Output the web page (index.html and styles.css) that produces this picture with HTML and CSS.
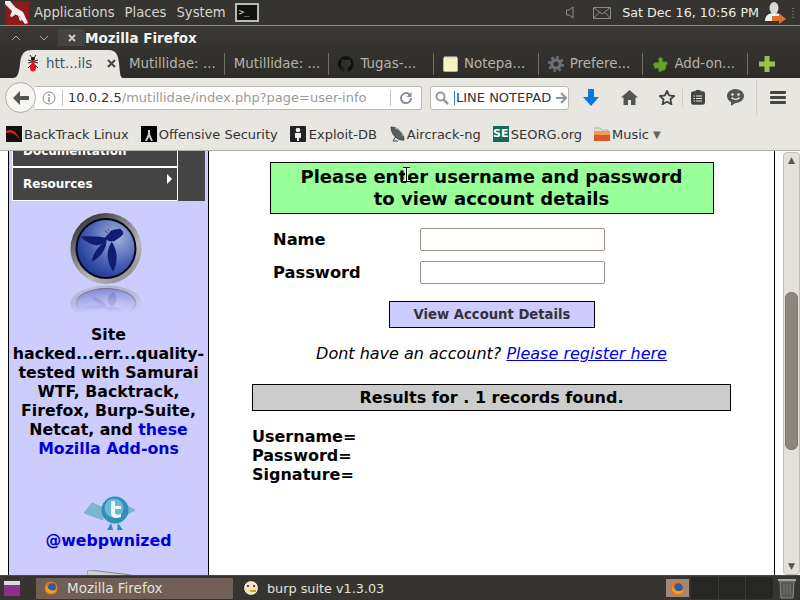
FILE: index.html
```html
<!DOCTYPE html>
<html lang="en">
<head>
<meta charset="utf-8">
<title>Mozilla Firefox</title>
<link rel="stylesheet" href="styles.css">
</head>
<body>
<div class="desktop">
  <header class="panel-top">
    <svg class="kali" width="24" height="24" viewBox="0 0 24 24"><rect width="24" height="24" fill="#8e1a1c"/><path d="M0 0h5l5 6 8 5 5 11-3 1-6-8-5-2-2 3-2-1 2-5-7-7z" fill="#f4eeee"/><path d="M9 11l-3 5 4-2zM13 14l2 6 2-1z" fill="#f4eeee"/></svg>
    <nav class="menus"><span>Applications</span><span>Places</span><span>System</span></nav>
    <div class="term"><span>&gt;_</span></div>
    <div class="tray">
      <svg width="8" height="13" viewBox="0 0 8 13"><path d="M.5 4h2.500l4-3v11l-4-3H.5z" fill="none" stroke="#8d8b85"/></svg>
      <svg class="mail" width="18" height="12" viewBox="0 0 18 12"><path d="M.5.5h17v11H.5zM.5.5l8.500 6.500 8.500-6.500M.5 11.500l6-6.500M17.500 11.500l-6-6.500" fill="none" stroke="#8d8b85"/></svg>
      <span class="clock">Sat Dec 16, 10:56 PM</span>
      <svg class="user" width="22" height="24" viewBox="0 0 22 24"><ellipse cx="9" cy="7" rx="4.500" ry="6" fill="#d9d9d6"/><path d="M0 20c0-5 3-8 9-8s8 3 8 8z" fill="#efefec"/><path d="M7 15h7v-3l7 6-7 5v-3H7z" fill="#e0702a"/></svg>
      <i class="grip"></i>
    </div>
  </header>
  <div class="titlebar">
    <div class="winbtns">
      <svg width="10" height="6" viewBox="0 0 10 6"><path d="M1 5l4-4 4 4" fill="none" stroke="#aaa"/></svg>
      <svg width="10" height="6" viewBox="0 0 10 6"><path d="M1 1l4 4 4-4" fill="none" stroke="#aaa"/></svg>
      <div class="closebtn"><svg width="8" height="8" viewBox="0 0 8 8"><path d="M1 1l6 6M7 1L1 7" stroke="#ccc" stroke-width="2"/></svg></div>
    </div>
    <strong class="wintitle">Mozilla Firefox</strong>
  </div>
  <div class="tabbar">
    <div class="tab active">
      <svg width="12" height="17" viewBox="0 0 12 17"><path d="M3 0l2 3M9 0L7 3M1 5l10 3M11 5L1 8M1 13l3-3M11 13l-3-3" stroke="#222" fill="none"/><ellipse cx="6" cy="4" rx="2" ry="2" fill="#111"/><ellipse cx="6" cy="7.500" rx="1.700" ry="2" fill="#c22"/><ellipse cx="6" cy="12.500" rx="3" ry="4" fill="#e40f1a"/></svg>
      <span>htt...ils</span>
      <svg class="tabx" width="9" height="9" viewBox="0 0 9 9"><path d="M1 1l7 7M8 1L1 8" stroke="#444" stroke-width="2"/></svg>
    </div>
    <div class="tab w105"><span>Mutillidae: ...</span></div>
    <div class="tab w105"><span>Mutillidae: ...</span></div>
    <div class="tab w105"><svg width="16" height="16" viewBox="0 0 16 16"><path fill="#111" d="M8 0a8 8 0 0 0-2.500 15.600c.4.100.5-.2.500-.4v-1.400c-2.200.5-2.700-1-2.700-1-.4-.9-.9-1.200-.9-1.200-.7-.5.100-.5.100-.5.800.100 1.200.8 1.200.8.700 1.200 1.900.9 2.300.7.100-.5.300-.9.500-1.100-1.800-.2-3.600-.9-3.600-4 0-.9.300-1.600.8-2.100-.1-.2-.4-1 .1-2.100 0 0 .7-.2 2.200.8a7.600 7.600 0 0 1 4 0c1.500-1 2.200-.8 2.200-.8.400 1.100.2 1.900.1 2.100.5.600.8 1.300.8 2.100 0 3.100-1.900 3.700-3.700 3.900.3.300.6.800.6 1.500v2.200c0 .2.100.5.600.4A8 8 0 0 0 8 0z"/></svg><span>Tugas-...</span></div>
    <div class="tab w105"><svg width="15" height="16" viewBox="0 0 15 16"><rect x=".5" y="1.500" width="14" height="14" rx="1" fill="#f7f3c2" stroke="#b5b2a0"/><path d="M1 1.500h13" stroke="#ddd" stroke-width="2"/></svg><span>Notepa...</span></div>
    <div class="tab w105"><svg width="16" height="16" viewBox="0 0 16 16"><circle cx="8" cy="8" r="4.200" fill="none" stroke="#6d7278" stroke-width="3.200"/><circle cx="8" cy="8" r="6.800" fill="none" stroke="#6d7278" stroke-width="2.400" stroke-dasharray="2.700 2.640"/></svg><span>Prefere...</span></div>
    <div class="tab w105"><svg width="16" height="16" viewBox="0 0 16 16"><path d="M1 8l3-2 2 1 1-2-1-2 3-2 2 2-1 2 2 1 2-1 2 3-2 1v3l-2 3-2-1-1 2-3-1 1-2-2-1-2 1z" fill="#6aa02c" stroke="#3d6f16" stroke-width=".8"/></svg><span>Add-on...</span></div>
    <div class="plus"><svg width="16" height="16" viewBox="0 0 16 16"><path d="M5.500 0h5v5.500H16v5h-5.500V16h-5v-5.500H0v-5h5.500z" fill="#9dc243"/></svg></div>
  </div>
  <div class="navbar">
    <div class="backbtn"><svg width="16" height="14" viewBox="0 0 16 14"><path d="M7 0L0 7l7 7V9h9V5H7z" fill="#555"/></svg></div>
    <div class="urlbar">
      <svg width="14" height="14" viewBox="0 0 14 14"><circle cx="7" cy="7" r="6" fill="none" stroke="#8a8a88"/><path d="M7 6v5M7 3v2" stroke="#8a8a88" stroke-width="1.400"/></svg>
      <span class="sep"></span>
      <span class="url"><b>10.0.2.5</b>/mutillidae/index.php?page=user-info</span>
      <span class="sep right"></span>
      <svg width="14" height="14" viewBox="0 0 14 14"><path d="M12 7a5 5 0 1 1-1.500-3.500" fill="none" stroke="#8a8f94" stroke-width="2"/><path d="M12.500 1v5h-5z" fill="#8a8f94"/></svg>
    </div>
    <div class="searchbar">
      <svg width="14" height="14" viewBox="0 0 14 14"><circle cx="5.500" cy="5.500" r="4" fill="none" stroke="#9a9a98" stroke-width="2"/><path d="M8.500 8.500L13 13" stroke="#9a9a98" stroke-width="2.500"/></svg>
      <span class="caret"></span><span class="query">LINE NOTEPAD</span>
      <svg class="go" width="11" height="12" viewBox="0 0 11 12"><path d="M0 6h9M5 1l5 5-5 5" fill="none" stroke="#8d96a0" stroke-width="2"/></svg>
    </div>
    <div class="tools">
      <svg class="t1" width="16" height="17" viewBox="0 0 16 17"><path d="M5 0h6v8h5l-8 9-8-9h5z" fill="#0a78e0"/></svg>
      <svg class="t2" width="17" height="15" viewBox="0 0 17 15"><path d="M8.500 0L17 7.500h-2.500V15H10V10H7v5H2.500V7.500H0z" fill="#555"/></svg>
      <svg class="t3" width="16" height="15" viewBox="0 0 16 15"><path d="M8 1l2.100 4.500 4.900.6-3.600 3.300 1 4.800L8 11.800l-4.400 2.400 1-4.800L1 6.100l4.900-.6z" fill="none" stroke="#444" stroke-width="1.800"/></svg>
      <span class="tsep"></span>
      <svg class="t4" width="14" height="15" viewBox="0 0 14 15"><rect x=".8" y="2" width="12.400" height="12" rx="1.500" fill="#444" stroke="#444" stroke-width="1.600"/><rect x="4.500" y="0" width="5" height="3" fill="#444"/><path d="M5 6h6M5 8.500h6M5 11h6M2.500 6h1.500M2.500 8.500h1.500M2.500 11h1.500" stroke="#e8e6e1" stroke-width="1.200"/></svg>
      <svg class="t5" width="17" height="17" viewBox="0 0 17 17"><path d="M8.500 0C13 0 17 3 17 7s-4 7-8.500 7L4 17v-4C1.500 12 0 9.500 0 7c0-4 4-7 8.500-7z" fill="#555"/><circle cx="5.500" cy="5.500" r="1.300" fill="#e8e6e1"/><circle cx="11.500" cy="5.500" r="1.300" fill="#e8e6e1"/><path d="M4.500 8.500c2 2.500 6 2.500 8 0" stroke="#e8e6e1" fill="none" stroke-width="1.300"/></svg>
      <span class="tsep long"></span>
      <div class="burger"><i></i><i></i><i></i></div>
    </div>
  </div>
  <div class="bookmarks">
    <span class="bm"><svg width="16" height="16" viewBox="0 0 16 16"><rect width="16" height="16" fill="#111"/><path d="M0 5c6-3 11 1 14 9C10 8 6 6 0 7z" fill="#c22"/></svg>BackTrack Linux</span>
    <span class="bm"><svg width="16" height="16" viewBox="0 0 16 16"><rect width="16" height="16" fill="#000"/><path d="M7 4h2v4l3 7h-2L8 11l-2 4H4l3-7z" fill="#ccc"/></svg>Offensive Security</span>
    <span class="bm edb"><svg width="16" height="16" viewBox="0 0 16 16"><rect width="16" height="16" rx="1" fill="#222"/><circle cx="8" cy="4" r="2.300" fill="#eee"/><path d="M5 7h6v5H9v3H7v-3H5z" fill="#eee"/></svg>Exploit-DB</span>
    <span class="bm"><svg width="16" height="16" viewBox="0 0 16 16"><path d="M2 1c7 0 13 6 13 13C8 15 2 8 2 1z" fill="#5b605f" stroke="#333" stroke-width=".8"/><path d="M6 2c4 1 7 4 8 8" stroke="#a9c0c4" fill="none"/><path d="M7 10l-3 5h5" stroke="#444" fill="none"/></svg>Aircrack-ng</span>
    <span class="bm se"><em>SE</em>SEORG.org</span>
    <span class="bm"><svg width="16" height="16" viewBox="0 0 16 16"><path d="M0 2h6l2 2h6v2H0z" fill="#ddd" stroke="#999" stroke-width=".6"/><rect y="5" width="16" height="10" fill="#d9582a"/><rect y="5" width="16" height="4" fill="#ee9a5a"/></svg>Music <small>▼</small></span>
  </div>
  <main class="browser">
    <div class="page">
      <aside class="sidebar">
        <div class="menu">
          <div class="menu-col">
            <div class="item doc"><span>Documentation</span></div>
            <div class="item res"><span>Resources</span><i class="arrow"></i></div>
          </div>
          <div class="menu-fill"></div>
        </div>
        <div class="owasp">
          <svg width="72" height="102" viewBox="0 0 72 102">
            <defs>
              <radialGradient id="g" cx=".68" cy=".3" r=".85"><stop offset="0" stop-color="#a6b4dc"/><stop offset=".55" stop-color="#4a62b4"/><stop offset="1" stop-color="#162c8c"/></radialGradient>
              <linearGradient id="r" x1=".1" y1="0" x2=".8" y2="1"><stop offset="0" stop-color="#222"/><stop offset=".35" stop-color="#777"/><stop offset=".7" stop-color="#b8b8b8"/><stop offset="1" stop-color="#888"/></linearGradient>
              <linearGradient id="f" x1="0" y1="0" x2="0" y2="1"><stop offset="0" stop-color="#fff" stop-opacity=".9"/><stop offset="1" stop-color="#fff" stop-opacity="0"/></linearGradient>
              <mask id="m"><rect y="72" width="72" height="28" fill="url(#f)"/></mask>
              <g id="disc">
                <circle cx="36" cy="35.500" r="35.500" fill="url(#r)"/>
                <circle cx="36" cy="35.500" r="30.500" fill="#05081e"/>
                <circle cx="36" cy="35.500" r="28.500" fill="url(#g)"/>
                <path d="M10.700 23.700c10-1 21 0 27.300 1.600-4 6-9 7.500-13 6.700-6-1-11-5-14.300-8.300zM36.700 27.700c-1 9-6 17-15 21 1-7 6-16 15-21zM41.700 28.700c6 8 6.500 20 1.600 30-5-7-9-19-1.600-30z" fill="#101d70"/>
                <path d="M35 25c2-3 5-5 6-7l3-1 6-1c2 1 3 3 3 5l-3 3-6 4-5 0zM38 16l1 2M35 18l3 2" fill="#101d70" stroke="#101d70" stroke-width=".6"/>
              </g>
            </defs>
            <use href="#disc"/>
            <g mask="url(#m)" opacity=".6"><use href="#disc" transform="translate(0 108) scale(1 -.5)"/></g>
          </svg>
        </div>
        <p class="blurb">Site hacked...err...quality-tested with Samurai WTF, Backtrack, Firefox, Burp-Suite, Netcat, and <a>these Mozilla Add-ons</a></p>
        <div class="bird">
          <svg width="52" height="36" viewBox="0 0 52 36"><path d="M0 17l8-10 12 5-1 12zM40 8l11 6-10 6z" fill="#7db7cf" stroke="#5a9fbe" stroke-width=".5"/><circle cx="31" cy="14" r="13.500" fill="#2f8fb8"/><circle cx="30" cy="12" r="9.500" fill="#6db8d6"/><path d="M27 5h4v5h6v3h-6v4c0 2 3 2 6 1v3c-5 2-10 1-10-4z" fill="#eef8fb"/><path d="M27 27l-4 7h6zM34 27l-1 7h6z" fill="#2f8fb8"/></svg>
        </div>
        <a class="handle">@webpwnized</a>
        <svg class="next-logo" width="44" height="6" viewBox="0 0 44 6"><path d="M0 3c0-2 1-3 3-3l41 5v1H0z" fill="#cfcfcf" stroke="#777" stroke-width=".8"/></svg>
      </aside>
      <section class="content">
        <h2 class="banner">Please enter username and password<br>to view account details</h2>
        <form class="login">
          <div class="field"><label>Name</label><input type="text"></div>
          <div class="field"><label>Password</label><input type="text"></div>
          <div class="actions"><button type="button">View Account Details</button></div>
        </form>
        <p class="register"><i>Dont have an account? </i><a>Please register here</a></p>
        <div class="results">Results for . 1 records found.</div>
        <div class="record">Username=<br>Password=<br>Signature=</div>
      </section>
    </div>
    <div class="scrollbar">
      <span class="up">▲</span>
      <div class="thumb"></div>
      <span class="down">▼</span>
    </div>
    <svg class="ibeam" width="9" height="15" viewBox="0 0 9 15"><path d="M1 .5h7M4.500.5v14M1 14.500h7" stroke="#fff" stroke-width="3"/><path d="M1 .5h7M4.500.5v14M1 14.500h7" stroke="#000"/></svg>
  </main>
  <footer class="panel-bottom">
    <svg class="showdesk" width="16" height="15" viewBox="0 0 16 15"><rect width="16" height="15" fill="#8d2f8d"/><rect width="16" height="4" fill="#dcdcdc"/></svg>
    <div class="task current"><svg width="14" height="14" viewBox="0 0 16 16"><circle cx="8" cy="8" r="7.500" fill="#e8701f"/><circle cx="9" cy="7" r="4.500" fill="#2a5ca8"/><path d="M3 4c1 6 6 9 12 5-2 6-11 7-13 0z" fill="#f2a21f"/></svg><span>Mozilla Firefox</span></div>
    <div class="task burp"><svg width="16" height="16" viewBox="0 0 16 16"><circle cx="8" cy="8" r="7.500" fill="#f3e3c0" stroke="#222"/><circle cx="5" cy="6" r="1" fill="#222"/><circle cx="11" cy="6" r="1" fill="#222"/><path d="M6 10h7v2H8z" fill="#c9a21f"/></svg><span>burp suite v1.3.03</span></div>
    <div class="pager">
      <div class="ws on"><svg width="15" height="15" viewBox="0 0 16 16"><circle cx="8" cy="8" r="7.500" fill="#e8701f"/><circle cx="9" cy="7" r="4.500" fill="#2a5ca8"/><path d="M3 4c1 6 6 9 12 5-2 6-11 7-13 0z" fill="#f2a21f"/></svg></div>
      <div class="ws"></div><div class="ws"></div><div class="ws last"></div>
    </div>
    <svg class="trash" width="18" height="22" viewBox="0 0 18 22"><path d="M0 2h18v2H0z" fill="#aaa"/><path d="M2 4h14l-1 17H3z" fill="#55564f" stroke="#8a8a86"/><path d="M6 7v11M9 7v11M12 7v11" stroke="#777"/></svg>
  </footer>
</div>
</body>
</html>
```
FILE: styles.css
```css
* { box-sizing: border-box; }
html, body { margin: 0; padding: 0; }
body { font-family: "DejaVu Sans", sans-serif; overflow: hidden; }
.desktop { width: 800px; height: 600px; display: flex; flex-direction: column; overflow: hidden; background: #fff; }

.panel-top { height: 26px; flex: none; display: flex; align-items: center; background: #353431; border-bottom: 1px solid #8b8a84; color: #d8d6cf; font-size: 13.2px; }
.kali { margin-left: 5px; }
.menus { display: flex; gap: 10px; margin-left: 5px; }
.term { width: 24px; height: 19px; margin-left: 9px; background: #111; border: 2px solid #b9b9b4; color: #ddd; font: 9px/14px "DejaVu Sans Mono", monospace; padding-left: 2px; }
.tray { margin-left: auto; display: flex; align-items: center; }
.tray .mail { margin-left: 19px; }
.clock { margin-left: 11px; color: #eeeeea; font-size: 12.7px; }
.user { margin-left: 6px; }
.grip { width: 2px; height: 10px; margin: 0 6px 0 5px; background: repeating-linear-gradient(#6a6964 0 1px, transparent 1px 3px); }

.titlebar { height: 23px; flex: none; display: flex; align-items: center; background: linear-gradient(#3a3936, #343330); }
.winbtns { display: flex; align-items: center; width: 85px; padding-left: 11px; }
.winbtns svg + svg { margin-left: 18px; }
.closebtn { width: 27px; height: 17px; margin-left: 9px; display: flex; align-items: center; justify-content: center; background: #45443f; border-radius: 2px; }
.wintitle { color: #f4f4f0; font-size: 13.5px; }

.tabbar { height: 29px; flex: none; display: flex; align-items: stretch; background: linear-gradient(#343330, #2d2c29); padding-left: 10px; color: #b5b4ac; font-size: 13.4px; }
.tab { display: flex; align-items: center; gap: 6px; white-space: nowrap; padding-bottom: 1px; }
.tab.active { width: 113px; height: 28px; margin: 1px -3px 0 0; padding-left: 17px; gap: 7px; background: #e8e6e1; color: #44525c; clip-path: path("M3 28C8 28 9 22 10 14C11 4 14 0 22 0L99 0C106 0 108 5 109 13C110 22 110 28 113 28Z"); }
.tabx { margin-left: 8px; }
.w105 { width: 104.7px; border-right: 1px solid #70706a; margin: 4px 0 3px; padding-left: 9px; }
.w105 svg { flex: none; }
.plus { display: flex; align-items: center; padding-left: 11px; }

.navbar { height: 39px; flex: none; display: flex; align-items: center; background: #e8e6e1; padding-left: 5px; }
.backbtn { width: 31px; height: 31px; border-radius: 50%; background: #f6f5f2; border: 1px solid #b3ada2; display: flex; align-items: center; justify-content: center; z-index: 1; }
.urlbar { width: 387px; height: 24px; margin-left: -1px; background: #fff; border: 1px solid #bdb8ae; border-left: 0; border-radius: 0 3px 3px 0; display: flex; align-items: center; padding: 0 8px 0 7px; }
.sep { width: 1px; height: 16px; background: #c9c6bf; margin: 0 5px 0 6px; }
.sep.right { margin: 0 8px 0 auto; }
.url { font-size: 13px; color: #9a9a96; white-space: nowrap; }
.url b { font-weight: 400; color: #333; }
.searchbar { width: 139px; height: 24px; margin-left: 8px; background: #fff; border: 1px solid #bdb8ae; border-radius: 3px; display: flex; align-items: center; padding-left: 4px; font-size: 13px; color: #333; white-space: nowrap; overflow: hidden; }
.caret { width: 1px; height: 14px; background: #2a7bd6; margin-left: 5px; }
.query { margin-left: 1px; }
.go { flex: none; margin-left: 5px; }
.tools { display: flex; align-items: center; flex: 1; }
.t1 { margin-left: 14px; }
.t2 { margin-left: 22px; }
.t3 { margin-left: 21px; }
.tsep { width: 1px; height: 18px; background: #cfccc5; margin-left: 7px; }
.tsep.long { height: 35px; margin-left: 12px; }
.t4 { margin-left: 8px; }
.t5 { margin-left: 22px; }
.burger { margin-left: 13px; width: 16px; display: flex; flex-direction: column; gap: 2px; }
.burger i { display: block; height: 3px; background: #444; border-radius: 1px; }

.bookmarks { height: 34px; flex: none; display: flex; align-items: center; background: #e8e6e1; border-bottom: 1px solid #b4afa4; padding: 1px 0 0 6px; gap: 12px; font-size: 13px; color: #333; white-space: nowrap; }
.bm { display: inline-flex; align-items: center; gap: 2px; }
.edb { gap: 3px; }
.bm small { font-size: 10px; color: #666; margin-left: 2px; }
.se em { font-style: normal; font-weight: 700; font-size: 11px; width: 16px; height: 16px; line-height: 16px; background: #126a5a; color: #fff; text-align: center; }

.browser { flex: 1; min-height: 0; display: flex; position: relative; background: #fff; overflow: hidden; }
.page { width: 783px; flex: none; display: flex; align-items: stretch; padding-left: 8px; font-weight: 700; overflow: hidden; }
.sidebar { width: 201px; flex: none; background: #ccf; border-left: 1px solid #000; border-right: 1px solid #000; text-align: center; display: flex; flex-direction: column; align-items: center; overflow: hidden; }
.menu { width: 100%; display: flex; padding: 0 3px; }
.menu-col { width: 166px; flex: none; background: #fff; padding: 0 1px 1px; }
.menu-fill { flex: 1; background: #444; }
.item { background: #444; color: #fff; font-size: 12px; text-align: left; padding-left: 10px; position: relative; }
.doc { height: 15px; overflow: hidden; display: flex; align-items: flex-end; }
.doc span { display: block; line-height: 16px; margin-bottom: 7px; }
.res { height: 32px; margin-top: 2px; line-height: 33px; }
.arrow { position: absolute; right: 5px; top: 6px; border-left: 5px solid #fff; border-top: 5px solid transparent; border-bottom: 5px solid transparent; }
.owasp { margin: 12px 5px 0 0; height: 102px; }
.owasp svg { display: block; }
.blurb { margin: 10px 0 0; width: 196px; font-size: 15.75px; line-height: 19px; color: #000; }
.blurb a, .handle { color: #0000d6; }
.bird { margin-top: 38px; height: 36px; }
.bird svg { display: block; margin-left: 3px; }
.handle { font-size: 15.8px; line-height: 19px; margin-top: -1px; }
.next-logo { flex: none; margin-top: 20px; }

.content { width: 566px; flex: none; padding: 11px 43px 0; border-right: 1px solid #000; display: flex; flex-direction: column; align-items: center; color: #000; }
.banner { width: 444px; flex: none; margin: 0; height: 52px; background: #9f9; border: 1px solid #000; text-align: center; font-size: 18px; line-height: 22px; padding-top: 3px; font-weight: 700; }
.login { width: 100%; padding-left: 21px; margin-top: 13px; }
.field { display: flex; align-items: center; height: 24px; margin-bottom: 9px; font-size: 16.3px; }
.field label { width: 147px; }
.field input { width: 185px; height: 23px; background: #fff; border: 1px solid #9a9285; border-radius: 2px; padding: 0; margin: 0; }
.actions { margin-top: 17px; padding-left: 116px; }
.actions button { display: block; width: 206px; height: 27px; background: #ccf; border: 1px solid #000; color: #333; font: 700 13.2px "DejaVu Sans", sans-serif; padding: 0; }
.register { margin: 16px 0 0; height: 19px; font-size: 16px; line-height: 19px; font-weight: 400; white-space: nowrap; }
.register a { color: #0000ee; text-decoration: underline; font-style: italic; }
.results { width: 479px; height: 27px; margin-top: 21px; background: #ccc; border: 1px solid #000; text-align: center; font-size: 16px; line-height: 25px; }
.record { align-self: flex-start; margin: 16px 0 0; font-size: 16px; line-height: 19px; }

.scrollbar { flex: 1; position: relative; background: #e4e1db; border: 1px solid #c3bdb3; border-radius: 4px; margin-top: 1px; display: flex; flex-direction: column; align-items: center; color: #555; font-size: 9px; padding: 2px 0 3px; justify-content: space-between; }
.up, .down { line-height: 10px; }
.thumb { position: absolute; left: 1px; right: 1px; top: 139px; height: 158px; background: #8d867a; border: 1px solid #7d776c; border-radius: 6px; }
.ibeam { position: absolute; left: 402px; top: 16px; }

.panel-bottom { height: 25px; flex: none; display: flex; align-items: center; background: #353431; border-top: 1px solid #4a4945; padding-left: 4px; color: #e4e2da; font-size: 13.5px; }
.task { display: flex; align-items: center; gap: 9px; height: 21px; padding-left: 8px; }
.task.current { width: 197px; margin-left: 16px; background: #6f5f55; border-radius: 1px; }
.burp { margin-left: 2px; gap: 8px; font-size: 12.8px; }
.pager { margin-left: auto; display: flex; height: 22px; background: #262624; border-radius: 0 3px 3px 0; margin-right: 5px; }
.ws { width: 27.250px; border-right: 1px solid #3b3a36; display: flex; align-items: center; justify-content: center; }
.ws.on { background: #a08878; border: 2px solid #353431; }
.ws.last { border-right: 0; }
.trash { margin-right: 4px; }
```
